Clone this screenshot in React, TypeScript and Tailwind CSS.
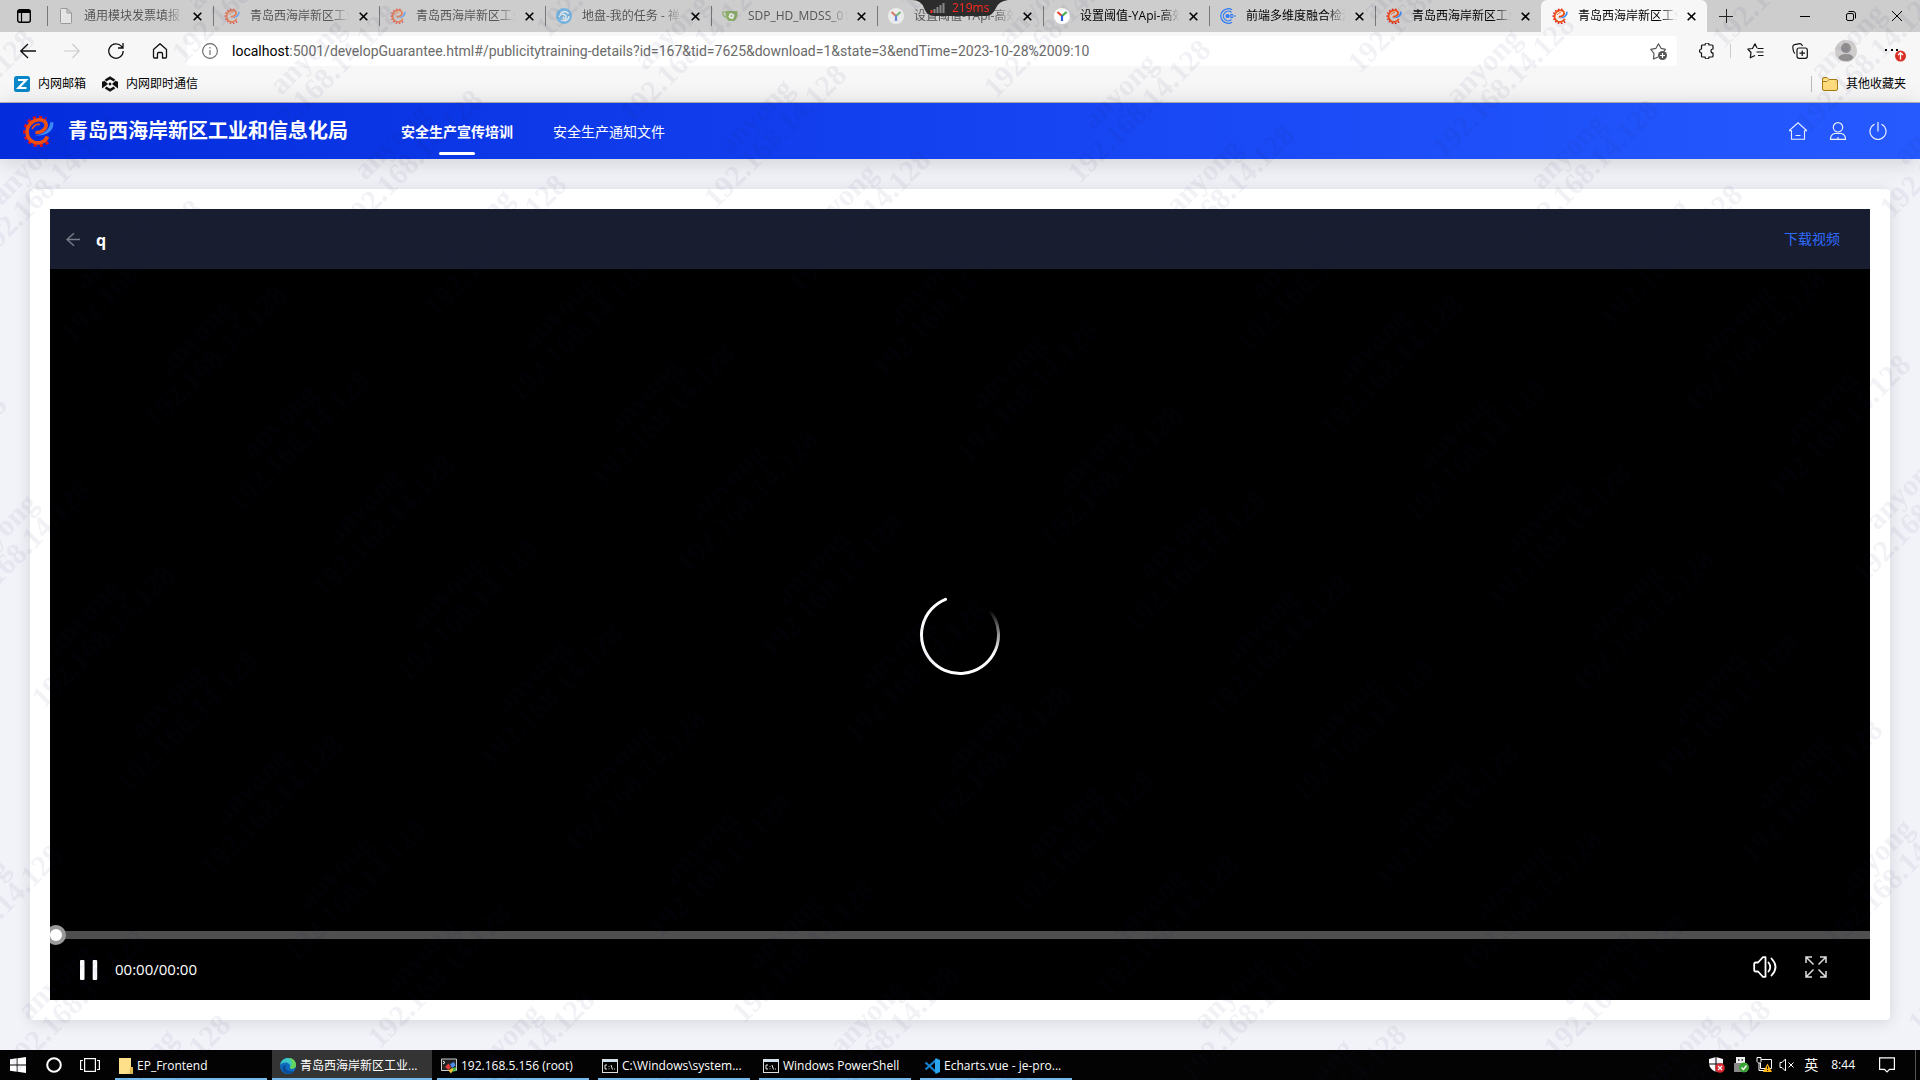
import { useState } from "react";
import type { ReactNode } from "react";

type IconProps = { className?: string };

function GearLogo({ className }: IconProps) {
    return (
        <svg viewBox="0 0 32 32" className={className} fill="none">
            <path d="M26 27A14 14 0 1 1 24 4.500" stroke="#e0101c" strokeWidth="3.400" strokeDasharray="3 3" />
            <path d="M25.500 21.500C23 27.500 16 29.500 10.500 26.500C4 23 3.500 14 8.500 8.500C13 3.800 21 3.500 23.500 7.500C26 12 21 18 13.500 17.500" stroke="#f0500f" strokeWidth="3.600" />
            <path d="M10 14C12 10.500 15.500 9 18 9.500" stroke="#f0500f" strokeWidth="1.600" />
            <path d="M31 7C33 14.500 25 22 13.500 20.300C21.500 19.500 28 14.500 28.200 7.500Z" fill="#3d8cf5" />
        </svg>
    );
}

function DocIcon() {
    return (
        <svg viewBox="0 0 16 16" className="size-4" fill="#f4f4f4" stroke="#777" strokeWidth="1">
            <path d="M2.5 1.5q0-1 1-1H9L13.5 5v9.5q0 1-1 1h-9q-1 0-1-1zM9 .5V5h4.5" />
        </svg>
    );
}

function SwirlIcon() {
    return (
        <svg viewBox="0 0 16 16" className="size-4" fill="none">
            <circle cx="8" cy="8" r="8" fill="#3fa6ea" />
            <path d="M4 6.5C6 2.5 11.5 3 12.5 6M3 9c1-2.500 4-3.500 6-2s1 4.500-1 4-1-2 .5-1.800M13 8c0 3.500-4 6-8 4" stroke="#fff" strokeWidth="1.300" />
        </svg>
    );
}

function TeaIcon() {
    return (
        <svg viewBox="0 0 16 16" className="size-4" fill="none">
            <path d="M4 4H1Q0 8 4.500 9.500" stroke="#609926" strokeWidth="1.200" />
            <path d="M3.500 3H15.500C16 8 14 12.500 11.500 13H7C4.500 12 3.500 8 3.500 3Z" fill="#609926" />
            <rect x="7" y="5.500" width="5" height="5" rx="1" fill="#fff" transform="rotate(25 9.500 8)" />
            <circle cx="9.500" cy="8" r="1" fill="#609926" />
        </svg>
    );
}

function YapiIcon() {
    return (
        <svg viewBox="0 0 16 16" className="size-4" fill="none" strokeWidth="2.200">
            <circle cx="8" cy="8" r="8" fill="#fff" />
            <path d="M3.500 4L8 8" stroke="#e5432d" />
            <path d="M12.500 4L8 8" stroke="#3fae49" />
            <path d="M8 7.500V13" stroke="#2d5de0" />
        </svg>
    );
}

function FusionIcon() {
    return (
        <svg viewBox="0 0 16 16" className="size-4" fill="none" stroke="#2f7bf5" strokeWidth="1.200">
            <path d="M12 1.800A7.300 7.300 0 1 0 12 14.200M11.500 4.500A4.800 4.800 0 1 0 11.500 11.500" />
            <circle cx="7.500" cy="8" r="1.500" fill="#2f7bf5" />
            <path d="M9 8H16M10 6.500H13M10 9.500H13" />
        </svg>
    );
}

type Tab = { title: string, icon: ReactNode, sleeping?: boolean };

const BUREAU = "青岛西海岸新区工业和信息化局";

const tabs: Tab[] = [
    { title: "通用模块发票填报", icon: <DocIcon />, sleeping: true },
    { title: BUREAU, icon: <GearLogo className="size-4" />, sleeping: true },
    { title: BUREAU, icon: <GearLogo className="size-4" />, sleeping: true },
    { title: "地盘-我的任务 - 禅道", icon: <SwirlIcon />, sleeping: true },
    { title: "SDP_HD_MDSS_01/src", icon: <TeaIcon />, sleeping: true },
    { title: "设置阈值-YApi-高效", icon: <YapiIcon />, sleeping: true },
    { title: "设置阈值-YApi-高效", icon: <YapiIcon /> },
    { title: "前端多维度融合检测", icon: <FusionIcon /> },
    { title: BUREAU, icon: <GearLogo className="size-4" /> },
    { title: BUREAU, icon: <GearLogo className="size-4" /> },
];

function TabStrip() {
    const [active, setActive] = useState(9);
    return (
        <div className="flex h-8 bg-[#cdcdcd] text-xs">
            <button type="button" aria-label="标签页操作" className="flex w-[47px] shrink-0 items-center justify-center">
                <svg viewBox="0 0 14 14" className="size-[14px]" fill="none" stroke="#000">
                    <rect x=".7" y=".7" width="12.600" height="12.600" rx="2" strokeWidth="1.400" />
                    <path d="M1 2.500H13" strokeWidth="3" />
                    <path d="M4.500 4V13" strokeWidth="1.200" />
                </svg>
            </button>
            {tabs.map((tab, i) => (
                <div key={i} className={i === active ? "flex w-[166px] items-center rounded-t-md bg-[#f7f7f7] pr-[11px] pl-[11px]" : "relative flex w-[166px] items-center pr-[11px] pl-[11px]"}>
                    {i !== active && <span className="absolute top-[6px] left-0 h-5 w-px bg-[#777]"></span>}
                    <span className={tab.sleeping ? "shrink-0 opacity-60" : "shrink-0"}>{tab.icon}</span>
                    <button
                        type="button"
                        onClick={() => setActive(i)}
                        className={(tab.sleeping ? "text-[#555]" : "text-black") + " ml-[10px] flex-1 overflow-hidden text-left whitespace-nowrap [mask-image:linear-gradient(to_right,black_80%,transparent)]"}
                    >
                        {tab.title}
                    </button>
                    <button type="button" aria-label="关闭标签页" className="ml-[9px] shrink-0">
                        <svg viewBox="0 0 9 9" className="size-[9px]" stroke="#000" strokeWidth="1.600"><path d="M.7.7l7.600 7.600M8.300.7L.7 8.300" /></svg>
                    </button>
                </div>
            ))}
            <button type="button" aria-label="新建标签页" className="ml-3">
                <svg viewBox="0 0 14 14" className="size-[14px]" stroke="#222"><path d="M7.500 0V14M0 7.500H14" /></svg>
            </button>
            <div className="ml-auto flex">
                <button type="button" aria-label="最小化" className="flex w-[46px] items-center justify-center">
                    <svg viewBox="0 0 10 10" className="size-[10px]" stroke="#000"><path d="M0 5.500H10" /></svg>
                </button>
                <button type="button" aria-label="还原" className="flex w-[46px] items-center justify-center">
                    <svg viewBox="0 0 10 10" className="size-[10px]" fill="none" stroke="#000"><rect x=".5" y="2.500" width="7" height="7" rx="1.500" /><path d="M2.500.5H7Q9.500.5 9.500 3V7.500" /></svg>
                </button>
                <button type="button" aria-label="关闭" className="flex w-[46px] items-center justify-center">
                    <svg viewBox="0 0 10 10" className="size-[10px]" stroke="#000"><path d="M0 0L10 10M10 0L0 10" /></svg>
                </button>
            </div>
        </div>
    );
}

function AddressBar() {
    return (
        <div className="flex h-[38px] items-center bg-[#f7f7f7] pr-[14px] pl-5 text-[#111]">
            <div className="flex gap-7">
                <button type="button" aria-label="后退">
                    <svg viewBox="0 0 16 16" className="size-4" fill="none" stroke="currentColor" strokeWidth="1.300"><path d="M16 8H.8M8 1L.8 8L8 15" /></svg>
                </button>
                <button type="button" aria-label="前进" className="text-[#ccc]">
                    <svg viewBox="0 0 16 16" className="size-4" fill="none" stroke="currentColor" strokeWidth="1.200"><path d="M0 8H15.200M8.500 1L15.200 8L8.500 15" /></svg>
                </button>
                <button type="button" aria-label="刷新">
                    <svg viewBox="0 0 16 16" className="size-4" fill="none" stroke="currentColor" strokeWidth="1.300"><path d="M15.200 8A7.200 7.200 0 1 1 13.500 3.400L14.500 4.700M15 0V5H10" /></svg>
                </button>
                <button type="button" aria-label="主页">
                    <svg viewBox="0 0 16 16" className="size-4" fill="none" stroke="currentColor" strokeWidth="1.300" strokeLinejoin="round"><path d="M1.500 6.500L8 .8L14.500 6.500V14q0 1-1 1H10.500V10.500q0-1-1-1H6.500q-1 0-1 1V15H2.500q-1 0-1-1Z" /></svg>
                </button>
            </div>
            <div className="ml-[19px] flex h-[30px] flex-1 items-center rounded-sm bg-white pr-[10px] pl-[15px]">
                <svg viewBox="0 0 16 16" className="size-4" fill="none" stroke="#666" strokeWidth="1.100"><circle cx="8" cy="8" r="7.400" /><path d="M8 7V12M8 4V5.500" /></svg>
                <div className="ml-[14px] flex-1 font-[Roboto,sans-serif] text-sm whitespace-nowrap text-[#6b6b6b]">
                    <span className="text-black">localhost</span>:5001/developGuarantee.html#/publicitytraining-details?id=167&amp;tid=7625&amp;download=1&amp;state=3&amp;endTime=2023-10-28%2009:10
                </div>
                <button type="button" aria-label="收藏此页">
                    <svg viewBox="0 0 17 17" className="size-[17px]" fill="none" stroke="#555" strokeWidth="1.200" strokeLinejoin="round">
                        <path d="M8 14L3.500 16L4 10.500L.8 6.300L6 5.300L8.500.8L11 5.300L15.500 6.300L14 8" />
                        <circle cx="12.500" cy="12.500" r="4.500" fill="#555" stroke="none" />
                        <path d="M12.500 10V15M10 12.500H15" stroke="#fff" />
                    </svg>
                </button>
            </div>
            <div className="ml-[22px] flex items-center">
                <button type="button" aria-label="扩展">
                    <svg viewBox="0 0 16 16" className="size-4" fill="none" stroke="currentColor" strokeWidth="1.200"><path d="M3.500 2H6A2 2 0 0 1 10 2H13q1 0 1 1V6A1.900 1.900 0 0 0 14 10V13q0 1-1 1H10A2 2 0 0 1 6 14H3.500q-1 0-1-1V10A2 2 0 0 1 2.500 6V3q0-1 1-1Z" /></svg>
                </button>
                <span className="ml-[15px] h-[14px] w-px bg-[#ccc]"></span>
                <button type="button" aria-label="收藏夹" className="ml-4">
                    <svg viewBox="0 0 17 16" className="h-4 w-[17px]" fill="none" stroke="currentColor" strokeWidth="1.200" strokeLinejoin="round"><path d="M10 5L8 .8L5.500 5.500L.8 6L4 9.500L3.300 14.800L8 12.500M10.500 5.500H16.500M9.500 9H16.500M11 12.500H16.500" /></svg>
                </button>
                <button type="button" aria-label="集锦" className="ml-7">
                    <svg viewBox="0 0 16 16" className="size-4" fill="none" stroke="currentColor" strokeWidth="1.200"><path d="M3 10.500Q1.500 9.500 1.200 7L.8 4Q.8 2 2.500 1.600L8 .7Q9.500.6 10.500 3" /><rect x="5" y="5" width="10.300" height="10.300" rx="2" /><path d="M10.200 7.500V13M7.500 10.200H13" /></svg>
                </button>
                <button type="button" aria-label="个人资料" className="ml-[27px]">
                    <svg viewBox="0 0 22 22" className="size-[22px]"><circle cx="11" cy="11" r="11" fill="#cfcdcc" /><circle cx="11" cy="8" r="5" fill="#929090" /><path d="M3.500 17.500Q5 14 11 14T18.500 17.500Q16 21 11 21T3.500 17.500Z" fill="#929090" /></svg>
                </button>
                <button type="button" aria-label="设置及其他" className="ml-7">
                    <svg viewBox="0 0 21 22" className="h-[22px] w-[21px]"><path d="M0 10H2M6 10H8M11 10H13" stroke="#000" strokeWidth="2" /><circle cx="15.500" cy="16" r="5.500" fill="#d93025" /><path d="M15.500 19.500V13M13 15L15.500 12.700L18 15" stroke="#fff" strokeWidth="1.300" fill="none" /></svg>
                </button>
            </div>
        </div>
    );
}

function Bookmarks() {
    return (
        <div className="flex h-[33px] items-center border-b border-[#b5b5b5] bg-[#f7f7f7] pr-[14px] pb-1 pl-[14px] text-xs text-black">
            <a href="#mail" className="flex items-center">
                <svg viewBox="0 0 16 16" className="size-4"><rect width="16" height="16" rx="2.500" fill="#0a87c9" /><path d="M4 4H12L4.500 12H12.500" fill="none" stroke="#fff" strokeWidth="2.200" /></svg>
                <span className="ml-2">内网邮箱</span>
            </a>
            <a href="#im" className="ml-4 flex items-center">
                <svg viewBox="0 0 16 16" className="size-4" fill="none" stroke="#111" strokeWidth="2.600">
                    <path d="M3.500 4.500L8 1.800L12.500 4.500M3.500 11.500L8 14.200L12.500 11.500M1.300 5.500V10L4 8L1.300 5.500M14.700 5.500V10L12 8L14.700 5.500" />
                    <path d="M8 6.300L9.700 8L8 9.700L6.300 8Z" fill="#111" stroke="none" />
                </svg>
                <span className="ml-2">内网即时通信</span>
            </a>
            <span className="ml-auto h-4 w-px bg-[#bbb]"></span>
            <a href="#others" className="ml-[10px] flex items-center">
                <svg viewBox="0 0 16 14" className="h-[14px] w-4" fill="#ffdc7c" stroke="#a67c12"><path d="M.5 2q0-1.500 1.500-1.500H5L7 2.500H14q1.500 0 1.500 1.500V12q0 1.500-1.500 1.500H2Q.5 13.500.5 12ZM.5 4.500H5L7 2.500" /></svg>
                <span className="ml-2">其他收藏夹</span>
            </a>
        </div>
    );
}

function SiteHeader() {
    return (
        <header className="relative flex h-14 items-center bg-linear-to-r from-[#042cdc] via-[#1542f1] to-[#265aff] pr-[33px] pl-[22px] text-white shadow-[0_2px_24px_rgba(0,0,0,0.16)]">
            <GearLogo className="size-8" />
            <h1 className="ml-[14px] text-xl font-bold">青岛西海岸新区工业和信息化局</h1>
            <nav className="ml-[53px] flex h-full gap-10 text-sm">
                <a href="#training" className="flex h-full flex-col items-center pt-5 font-bold">
                    <span className="leading-[18px]">安全生产宣传培训</span>
                    <span className="mt-[11px] h-[3px] w-9 rounded-sm bg-white"></span>
                </a>
                <a href="#notice" className="pt-5 leading-[18px]">安全生产通知文件</a>
            </nav>
            <div className="ml-auto flex gap-[22px] pb-px opacity-90">
                <button type="button" aria-label="首页">
                    <svg viewBox="0 0 18 18" className="size-[18px]" fill="none" stroke="#fff" strokeWidth="1.100"><path d="M0 8.800L9 .8L18 8.800H15.500V17.300H2.500V8.800ZM6.500 13.500H11.500" /></svg>
                </button>
                <button type="button" aria-label="用户">
                    <svg viewBox="0 0 18 18" className="size-[18px]" fill="none" stroke="#fff" strokeWidth="1.200"><circle cx="9" cy="5.300" r="4.700" /><path d="M5.500 11.500H12.500Q16.500 12.500 16.500 17.300H1.500Q1.500 12.500 5.500 11.500ZM9 15V17" /></svg>
                </button>
                <button type="button" aria-label="退出">
                    <svg viewBox="0 0 18 18" className="size-[18px]" fill="none" stroke="#fff" strokeWidth="1.200"><path d="M5.500 2.300A8 8 0 1 0 12.500 2.300M9 0V9.500" /></svg>
                </button>
            </div>
        </header>
    );
}

function Spinner() {
    return (
        <svg viewBox="0 0 80 80" className="size-20" fill="none" strokeWidth="3">
            <defs>
                <linearGradient id="fade" x1="70" y1="15" x2="76" y2="58" gradientUnits="userSpaceOnUse">
                    <stop offset="0" stopColor="#fff" stopOpacity="0" />
                    <stop offset="1" stopColor="#fff" />
                </linearGradient>
            </defs>
            <path d="M25.500 4.300A38.500 38.500 0 1 0 73.300 59.300" stroke="#fff" strokeLinecap="round" />
            <path d="M73.300 59.300A38.500 38.500 0 0 0 69.500 15.300" stroke="url(#fade)" />
        </svg>
    );
}

function Player() {
    const [progress, setProgress] = useState(0);
    return (
        <section className="flex flex-1 flex-col overflow-hidden bg-black">
            <div className="flex h-[60px] items-center bg-[#181d2f] pr-[30px] pl-4">
                <button type="button" aria-label="返回" className="flex">
                    <svg viewBox="0 0 14 14" className="size-[14px]" fill="none" stroke="#777c88" strokeWidth="1.500"><path d="M14 7.500H1M8 1.300L1 7.500L8 13.700" /></svg>
                </button>
                <h2 className="mt-px ml-4 text-base font-bold text-white">q</h2>
                <a href="#download" className="ml-auto text-sm text-[#2f6bff]">下载视频</a>
            </div>
            <div className="flex flex-1 items-center justify-center pt-[70px]">
                <Spinner />
            </div>
            <input
                type="range"
                aria-label="播放进度"
                min={0}
                max={100}
                value={progress}
                onChange={(e) => setProgress(Number(e.target.value))}
                className="block h-2 w-full appearance-none bg-[#4f4f4f] outline-none [&::-webkit-slider-thumb]:size-3 [&::-webkit-slider-thumb]:appearance-none [&::-webkit-slider-thumb]:rounded-full [&::-webkit-slider-thumb]:bg-white [&::-webkit-slider-thumb]:shadow-[0_0_0_4px_#9a9a9a]"
            />
            <div className="flex h-[61px] items-center pr-[43px] pl-[30px] text-white">
                <button type="button" aria-label="暂停">
                    <svg viewBox="0 0 18 20" className="h-5 w-[18px]" fill="#fff"><rect width="4.500" height="20" rx="1" /><rect x="12.700" width="4.500" height="20" rx="1" /></svg>
                </button>
                <span className="ml-[17px] text-[15px]">00:00/00:00</span>
                <button type="button" aria-label="音量" className="mb-[6px] ml-auto">
                    <svg viewBox="0 0 24 22" className="h-[22px] w-6" fill="none" stroke="#fff" strokeWidth="1.800" strokeLinejoin="round" strokeLinecap="round"><path d="M1.200 8q0-1.500 1.500-1.500H5L10 1.200H12.500V20.800H10L5 15.500H2.700q-1.500 0-1.500-1.500ZM15.500 6.500Q19 11 15.500 15.500M18.500 2.500Q26.500 11 18.500 19.500" /></svg>
                </button>
                <button type="button" aria-label="全屏" className="mb-[6px] ml-7">
                    <svg viewBox="0 0 22 22" className="size-[22px]" fill="none" stroke="#ddd" strokeWidth="1.500"><path d="M1 7V1H7M1 1L8.500 8.500M15 1H21V7M21 1L13.500 8.500M1 15V21H7M1 21L8.500 13.500M21 15V21H15M21 21L13.500 13.500" /></svg>
                </button>
            </div>
        </section>
    );
}

function TerminalIcon() {
    return (
        <svg viewBox="0 0 16 14" className="h-[14px] w-4"><rect x=".5" y=".5" width="15" height="13" fill="#000" stroke="#ddd" /><path d="M1 2H15" stroke="#cfe0ef" strokeWidth="2" /><path d="M5 6H3V10H5M7 7V7.800M7 9.500V10.300M9 6L10.500 10.500M12.500 9.500V10.500" stroke="#fff" strokeWidth=".9" fill="none" /></svg>
    );
}

const tasks = [
    {
        label: "EP_Frontend",
        icon: <svg viewBox="0 0 14 16" className="h-4 w-[14px]"><path d="M0 0H12V16H0Z" fill="#ffe08a" /><path d="M11 9H14V16H11Z" fill="#e8bf4e" /></svg>,
    },
    {
        label: "青岛西海岸新区工业...",
        icon: (
            <svg viewBox="0 0 16 16" className="size-4">
                <circle cx="8" cy="8" r="8" fill="#0f6cbd" />
                <path d="M0 7C1 2.500 4.500 0 8 0C13 0 16 3.500 16 7C16 9.500 14 10.800 12 10.800C10.500 10.800 9.500 10.200 10 9.300C11 7 8.500 4.500 5.500 4.500C3 4.500 1 5.500 0 7Z" fill="#3cc8c4" />
                <path d="M9 .1C13.500.5 16 3.500 16 7C16 9.500 14 10.800 12 10.800C11 10.800 9.500 10.200 10 9.300C13 7 12 3 9 .1Z" fill="#66d65a" />
                <path d="M6 7C4 11 8 15 14 13C11 17 3 16 2.500 10.500C2.500 8.500 4 7 6 7Z" fill="#0a4a96" />
            </svg>
        ),
    },
    {
        label: "192.168.5.156 (root)",
        icon: <svg viewBox="0 0 16 16" className="size-4"><path d="M.5 1H15.500V12.500H.5Z" fill="#222" stroke="#ccc" /><path d="M2 3L4 4.500L2 6" stroke="#fff" fill="none" /><path d="M4 9L7.500 5.500L10 9L7.500 12Z" fill="#e23b3b" /><path d="M9 6L13 4L14.500 7.500L11 10Z" fill="#4a8ff0" /><path d="M7.500 12.500L11 10L13 11L10 15.500Z" fill="#f2c230" /><path d="M12 10L15.500 9L14.500 13L11.500 14Z" fill="#4ab848" /></svg>,
    },
    { label: "C:\\Windows\\system...", icon: <TerminalIcon /> },
    { label: "Windows PowerShell", icon: <TerminalIcon /> },
    {
        label: "Echarts.vue - je-pro...",
        icon: <svg viewBox="0 0 16 16" className="size-4" fill="none"><path d="M12 2L1.500 11.500M12 14L1.500 4.500" stroke="#1583d0" strokeWidth="2.200" /><path d="M11.500 0L16 2V14L11.500 16L11 12.500V3.500Z" fill="#2aa5f0" /></svg>,
    },
];

function Taskbar() {
    return (
        <footer className="flex h-[30px] items-center bg-[#030304] text-xs text-white">
            <div className="flex items-center pl-[10px]">
                <button type="button" aria-label="开始">
                    <svg viewBox="0 0 16 16" className="size-4" fill="#fff"><path d="M0 2.200L6.700 1.300V7.600H0ZM7.500 1.200L16 0V7.600H7.500ZM0 8.400H6.700V14.700L0 13.800ZM7.500 8.400H16V16L7.500 14.800Z" /></svg>
                </button>
                <button type="button" aria-label="搜索" className="ml-5">
                    <svg viewBox="0 0 16 16" className="size-4" fill="none" stroke="#fff" strokeWidth="2"><circle cx="8" cy="8" r="6.800" /></svg>
                </button>
                <button type="button" aria-label="任务视图" className="ml-[18px]">
                    <svg viewBox="0 0 20 14" className="h-[14px] w-5" fill="none" stroke="#fff" strokeWidth="1.200"><rect x="4.600" y=".6" width="10.800" height="12.800" /><path d="M3 2.500H.6V11.500H3M17 2.500H19.400V11.500H17" /></svg>
                </button>
            </div>
            <div className="ml-[11px] flex h-full gap-px">
                {tasks.map((task, i) => (
                    <button
                        key={task.label}
                        type="button"
                        className={i === 1 ? "flex h-full w-40 items-center gap-1 border-b-2 border-[#76b9ed] bg-[#343434] px-2 pt-[3px] whitespace-nowrap" : "mx-1 flex h-full w-38 items-center gap-1 border-b-2 border-[#76b9ed] px-1 pt-[3px] whitespace-nowrap"}
                    >
                        <span className="shrink-0">{task.icon}</span>
                        {task.label}
                    </button>
                ))}
            </div>
            <div className="ml-auto flex items-center">
                <svg viewBox="0 0 16 16" className="size-4"><path d="M7 0L0 2V7Q1 12.500 7 15ZM7 0" fill="#fff" /><path d="M7 0L14 2V7Q13 12.500 7 15Z" fill="#fff" /><path d="M7 0V15M0 7H14" stroke="#030304" /><circle cx="11" cy="11" r="4.800" fill="#d8282f" /><path d="M9 9L13 13M13 9L9 13" stroke="#fff" strokeWidth="1.200" /></svg>
                <svg viewBox="0 0 16 16" className="ml-2 size-4"><path d="M3 0H12V6H3Z" fill="#eee" /><path d="M5 2H6.500V4H5ZM8.500 2H10V4H8.500Z" fill="#555" /><path d="M1 6H14V15H1Z" fill="#888" /><circle cx="11" cy="10.500" r="5" fill="#3aa335" /><path d="M8.500 10.500L10.500 12.500L13.500 8.500" stroke="#fff" strokeWidth="1.300" fill="none" /></svg>
                <svg viewBox="0 0 16 16" className="ml-[7px] size-4" fill="none" stroke="#fff"><path d="M5 2.500H15.500V11.500H4.500V6M1 .5H5V4.500L3 6.500L1 4.500ZM3 6V13.500H8" /><path d="M11.500 6.500L16 15H7Z" fill="#fcb515" stroke="none" /><path d="M11.500 9V12M11.500 13V14" stroke="#222" /></svg>
                <svg viewBox="0 0 15 14" className="ml-[7px] h-[14px] w-[15px]" fill="none" stroke="#fff"><path d="M1 4.500H3L6.500 1V13L3 9.500H1ZM9.500 4.500L14.500 9.500M14.500 4.500L9.500 9.500" /></svg>
                <span className="ml-[10px] text-sm">英</span>
                <span className="ml-[13px]">8:44</span>
                <button type="button" aria-label="通知" className="ml-6">
                    <svg viewBox="0 0 16 16" className="size-4" fill="none" stroke="#fff" strokeWidth="1.200"><path d="M.6.8H15.400V12.400H10.500L8 15L5.500 12.400H.6Z" /></svg>
                </button>
                <span className="mr-1 ml-5 h-[30px] w-px bg-[#555]"></span>
            </div>
        </footer>
    );
}

// latency badge of the remote desktop session
function LatencyBadge() {
    return (
        <div className="fixed top-0 left-1/2 z-20 flex h-4 w-24 -translate-x-1/2 items-center text-xs text-[#ff2a22]">
            <svg viewBox="0 0 96 16" className="absolute inset-0 h-4 w-24">
                <path d="M0 0H96Q87 1 84 8T75 16H22Q15 16 12 8T0 0Z" fill="#2c2c2c" />
                <path d="M19.500 10V13" stroke="#ff2a22" strokeWidth="2" />
                <path d="M22.500 9V13M25.500 7V13M28.500 5V13M31.500 3V13" stroke="#888" strokeWidth="2" />
            </svg>
            <span className="relative ml-10 leading-[18px]">219ms</span>
        </div>
    );
}

// slanted lattice: one step to the right is (364, -25), one step down is (84, 85)
const marks: { x: number, y: number }[] = [];
for (let a = -4; a <= 6; a++) {
    for (let b = -4; b <= 14; b++) {
        const x = 37 + 364 * a + 84 * b;
        const y = 176 - 25 * a + 85 * b;
        if (x > -120 && x < 2040 && y > -120 && y < 1200) marks.push({ x, y });
    }
}

function Watermark() {
    return (
        <div aria-hidden="true" className="pointer-events-none fixed inset-0 z-30 overflow-hidden font-['Liberation_Serif',serif] text-[30px] leading-7 font-bold text-[#28286e]/6">
            {marks.map((m) => (
                <div key={m.x + "," + m.y} className="absolute -translate-x-1/2 -translate-y-1/2 -rotate-45 text-center whitespace-nowrap" style={{ left: m.x, top: m.y }}>
                    anyong<br />192.168.14.128
                </div>
            ))}
        </div>
    );
}

function App() {
    return (
        <div className="flex min-h-screen flex-col bg-[#f2f3f8] font-['Open_Sans','Noto_Sans_CJK_SC',sans-serif]">
            <TabStrip />
            <AddressBar />
            <Bookmarks />
            <SiteHeader />
            <main className="flex flex-1 flex-col p-[30px]">
                <div className="flex flex-1 flex-col rounded-sm bg-white p-5 shadow-[0_2px_16px_rgba(0,0,0,0.12)]">
                    <Player />
                </div>
            </main>
            <Taskbar />
            <LatencyBadge />
            <Watermark />
        </div>
    );
}

export default App;
